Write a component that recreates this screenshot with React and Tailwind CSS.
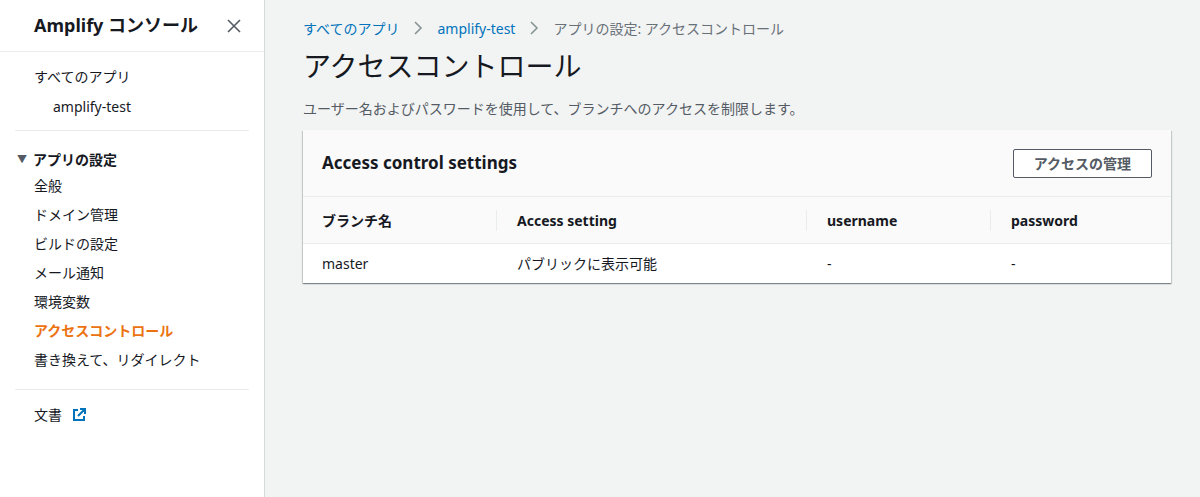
export default function App() {
  const f = { fontFamily: '"Noto Sans", "Noto Sans CJK JP", sans-serif' };
  const Chev = () => (<svg width="10" height="14" viewBox="0 0 10 14" fill="none" stroke="#879596" strokeWidth="1.6"><path d="M2 1l6 6-6 6"/></svg>);
  return (
    <div style={f} className="flex w-[1200px] h-[497px] bg-[#f2f3f3] text-[#16191f] text-[14px] overflow-hidden">
      <aside className="w-[265px] shrink-0 bg-white border-r border-[#d5dbdb] flex flex-col">
        <div className="h-[52px] flex items-center justify-between pl-[34px] pr-[22px] border-b border-[#eaeded]">
          <span className="text-[18px] font-bold">Amplify コンソール</span>
          <svg width="16" height="16" viewBox="0 0 16 16" stroke="#545b64" strokeWidth="1.6"><path d="M2 2L14 14M14 2L2 14"/></svg>
        </div>
        <div className="pt-[13px] pl-[34px]">
          <div className="h-[24px] leading-[24px]">すべてのアプリ</div>
          <div className="h-[24px] leading-[24px] mt-[6px] pl-[19px]">amplify-test</div>
        </div>
        <div className="mx-[15px] mt-[11px] border-t border-[#eaeded]" />
        <div className="pt-[16px] pl-[17px]">
          <div className="flex items-center gap-[6px] font-bold h-[24px]">
            <span className="text-[10px] text-[#545b64]">▼</span>アプリの設定
          </div>
        </div>
        <div className="pl-[34px] flex flex-col">
          {["全般","ドメイン管理","ビルドの設定","メール通知","環境変数"].map(t=>(
            <div key={t} className="h-[29px] leading-[29px]">{t}</div>
          ))}
          <div className="h-[29px] leading-[29px] text-[#ec7211] font-bold">アクセスコントロール</div>
          <div className="h-[29px] leading-[29px]">書き換えて、リダイレクト</div>
        </div>
        <div className="mx-[15px] mt-[15px] border-t border-[#eaeded]" />
        <div className="pl-[34px] pt-[14px] flex items-center gap-[10px]">
          文書
          <svg width="14" height="14" viewBox="0 0 14 14" fill="none" stroke="#0073bb" strokeWidth="2"><path d="M6 2H2v10h10V8M8 1h5v5M13 1L6 8"/></svg>
        </div>
      </aside>
      <main className="flex-1 pl-[38px] pr-[29px] pt-[16px]">
        <div className="flex items-center gap-[14px] text-[14px] h-[24px]">
          <span className="text-[#0073bb]">すべてのアプリ</span>
          <Chev />
          <span className="text-[#0073bb]">amplify-test</span>
          <Chev />
          <span className="text-[#687078]">アプリの設定: アクセスコントロール</span>
        </div>
        <h1 className="text-[28px] leading-[40px] mt-[6px]">アクセスコントロール</h1>
        <p className="text-[14px] text-[#545b64] mt-[12px]">ユーザー名およびパスワードを使用して、ブランチへのアクセスを制限します。</p>
        <div className="mt-[11px] bg-white shadow-[0_1px_1px_0_rgba(0,28,36,0.3),1px_1px_1px_0_rgba(0,28,36,0.15),-1px_1px_1px_0_rgba(0,28,36,0.15)]">
          <div className="h-[67px] bg-[#fafafa] border-b border-[#eaeded] flex items-center justify-between pl-[19px] pr-[19px]">
            <span className="text-[17px] font-bold">Access control settings</span>
            <button className="h-[29px] px-[20px] border border-[#545b64] bg-white text-[14px] font-bold text-[#545b64] rounded-[2px]">アクセスの管理</button>
          </div>
          <div className="grid grid-cols-[193px_310px_184px_1fr] h-[47px] items-center bg-[#fafafa] border-b border-[#eaeded] font-bold text-[14px]">
            <div className="pl-[19px]">ブランチ名</div>
            <div className="pl-[20px] border-l border-[#eaeded]">Access setting</div>
            <div className="pl-[20px] border-l border-[#eaeded]">username</div>
            <div className="pl-[20px] border-l border-[#eaeded]">password</div>
          </div>
          <div className="grid grid-cols-[193px_310px_184px_1fr] h-[39px] items-center text-[14px]">
            <div className="pl-[19px]">master</div>
            <div className="pl-[21px]">パブリックに表示可能</div>
            <div className="pl-[21px]">-</div>
            <div className="pl-[21px]">-</div>
          </div>
        </div>
      </main>
    </div>
  );
}
